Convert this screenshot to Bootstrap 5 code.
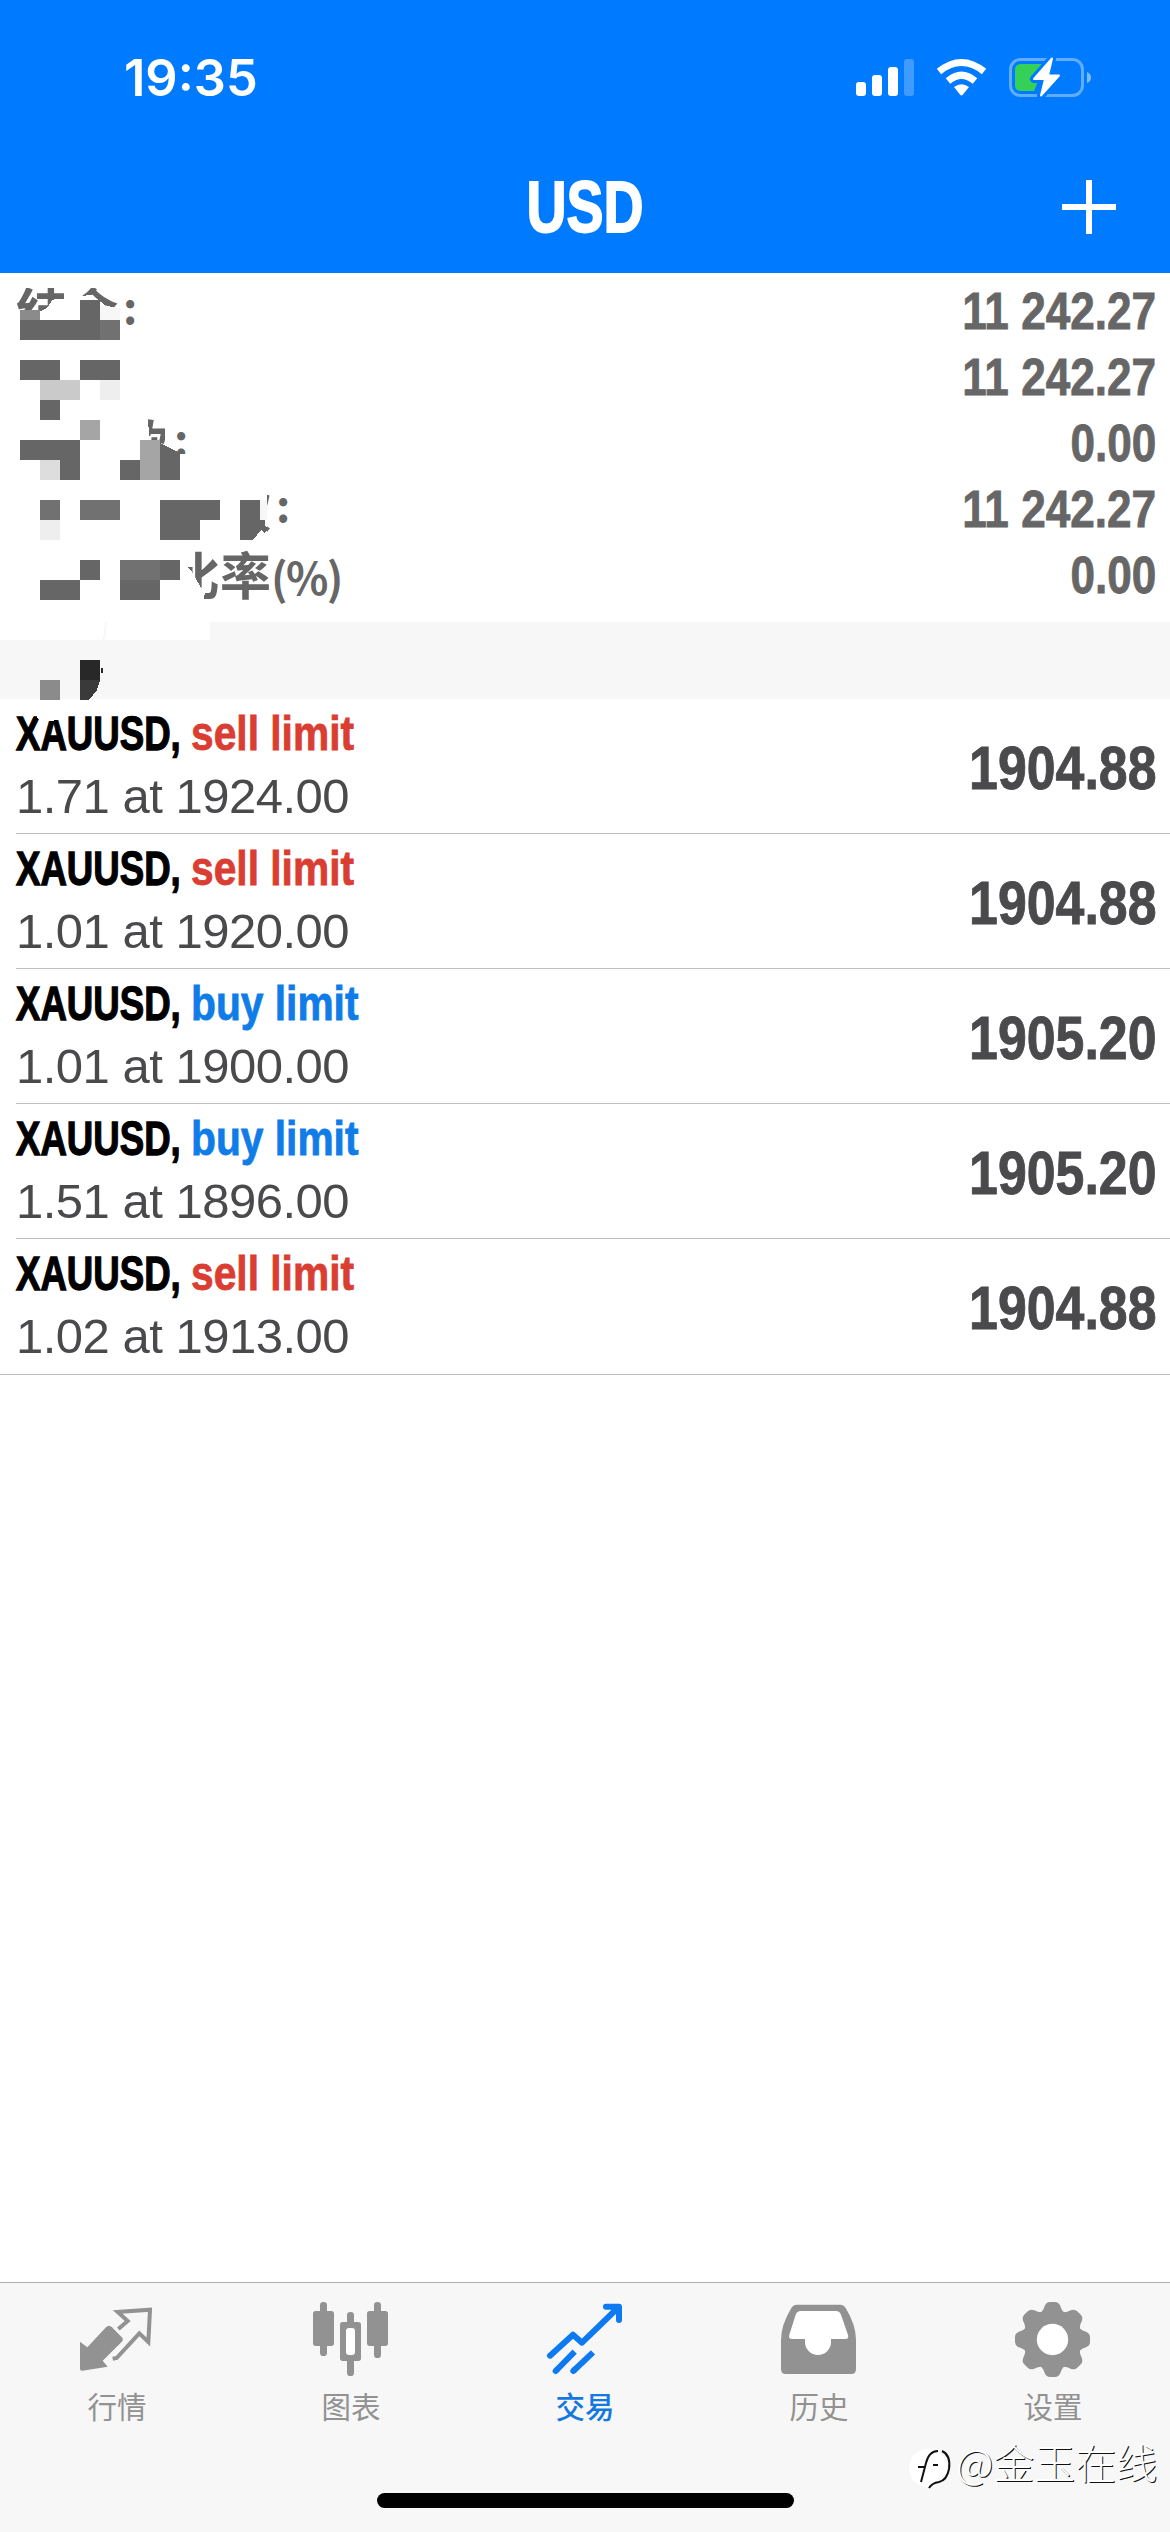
<!DOCTYPE html>
<html lang="zh-CN">
<head>
<meta charset="utf-8">
<meta name="viewport" content="width=device-width, initial-scale=1">
<title>USD</title>
<link href="https://cdn.jsdelivr.net/npm/bootstrap@5.3.0/dist/css/bootstrap.min.css" rel="stylesheet">
<style>
body{font-family:"Liberation Sans","Noto Sans CJK SC",sans-serif;background:#fff;color:#4a4a4d}
.screen{width:1170px;height:2532px;overflow:hidden}
.topbar{height:273px;background:#007aff;color:#fff}
.statusline{height:140px;padding:48px 78px 0 124px}
.clock{font:600 50.500px/60px Inter,sans-serif}
.status-icons{margin-top:5px}
.titleline{height:133px;padding:0 54px}
.title-side{width:54px}
.squeeze{display:inline-block;white-space:nowrap;transform-origin:0 50%}
.title{font-size:73px;font-weight:700;line-height:90px;transform:scaleX(.76);transform-origin:50% 50%;-webkit-text-stroke:1.8px #fff}
.summary{height:349px;padding:6px 14px 0 16px}
.summary-row{height:66px;color:#666}
.summary-label{font-size:51px;font-weight:700;line-height:66px;white-space:nowrap}
.label-tail{font-family:"Noto Sans CJK SC",sans-serif;font-size:44px;letter-spacing:-1.600px}
.label-colon{position:relative;top:-7px;margin-left:5px}
.summary-value{font-size:51px;font-weight:700;line-height:66px;transform:scaleX(.865);transform-origin:100% 50%;-webkit-text-stroke:.8px #666}
.band{height:77px;background:#f7f7f7}
.mosaic{left:0;top:273px;pointer-events:none}
.order{height:135px;margin-left:16px;padding:4px 14px 0 0;border-bottom:1px solid #c0c0c2}
.order:last-child{height:136px;margin-left:0;padding-left:16px}
.symbol-box{width:175px;height:60px}
.symbol,.kind{font-size:48.500px;font-weight:700;line-height:60px}
.symbol{color:#000;transform:scaleX(.755);-webkit-text-stroke:1.300px #000}
.kind{transform:scaleX(.84);-webkit-text-stroke:.8px currentColor}
.sell{color:#da3d32}
.buy{color:#0f7ce8}
.volume{font-size:49px;line-height:66px;letter-spacing:-.5px}
.price{font-size:61px;font-weight:700;line-height:130px;transform:scaleX(.85);transform-origin:100% 50%;-webkit-text-stroke:.9px #4a4a4d}
.tabs{height:250px;background:#f7f7f7;border-top:1px solid #b0b0b2;color:#929292}
.tab-item{padding-top:17px;font:400 29.5px/44px "Noto Sans CJK SC",sans-serif}
.tab-item svg{display:block;margin-bottom:5px}
.tab-item.active{color:#1478e0;font-weight:500}
.homebar{left:377px;top:2493px;width:417px;height:15px;border-radius:8px;background:#000}
.watermark{left:908px;top:2434px;color:#fff}
.watermark-text{font:300 41px/56px "Noto Sans CJK SC",sans-serif;text-shadow:1px 1px 0 #111;margin:-3px 0 0 2px;white-space:nowrap}
</style>
<script src="https://cdn.jsdelivr.net/npm/bootstrap@5.3.0/dist/js/bootstrap.bundle.min.js"></script>
</head>
<body>
<div class="screen position-relative d-flex flex-column">
  <header class="topbar">
    <div class="statusline d-flex justify-content-between align-items-start">
      <span class="clock">19:35</span>
      <svg class="status-icons" width="240" height="50" viewBox="852 53 240 50">
        <g fill="#fff"><rect x="856" y="82" width="10" height="14" rx="3"/><rect x="872" y="75" width="10" height="21" rx="3"/><rect x="888" y="67" width="10" height="29" rx="3"/><rect x="904" y="59" width="10" height="37" rx="3" opacity=".25"/></g>
        <g fill="none" stroke="#fff" stroke-width="7"><path d="M939 71.500Q961.500 53.500 984 71.500"/><path d="M948 81Q961.500 69.500 975 81"/></g>
        <path d="M954 87Q961.500 81.500 969 87L963 94.500Q961.500 96.500 960 94.500Z" fill="#fff"/>
        <rect x="1010.500" y="59.500" width="72" height="36" rx="10" fill="none" stroke="#fff" stroke-opacity=".38" stroke-width="3"/>
        <path d="M1087 72Q1091 73.500 1091 77.500T1087 83Z" fill="#fff" opacity=".5"/>
        <path d="M1021 64H1045L1034 91H1021Q1015 91 1015 85V70Q1015 64 1021 64Z" fill="#34d058"/>
        <path d="M1052 58.500L1034 79H1045L1041 95.500L1059 75.500H1048Z" fill="#fff" stroke="#007aff" stroke-width="8" stroke-linejoin="round"/>
        <path d="M1052 58.500L1034 79H1045L1041 95.500L1059 75.500H1048Z" fill="#fff" stroke="#fff" stroke-width="2" stroke-linejoin="round"/>
      </svg>
    </div>
    <div class="titleline d-flex align-items-center">
      <div class="title-side"></div>
      <div class="flex-fill text-center"><span class="squeeze title">USD</span></div>
      <svg width="54" height="54" viewBox="0 0 54 54"><path d="M27 0V54M0 27H54" stroke="#fff" stroke-width="6"/></svg>
    </div>
  </header>

  <section class="summary">
    <div class="summary-row d-flex justify-content-between align-items-start"><span class="summary-label">结余<span class="label-tail label-colon">:</span></span><span class="squeeze summary-value">11 242.27</span></div>
    <div class="summary-row d-flex justify-content-end"><span class="squeeze summary-value">11 242.27</span></div>
    <div class="summary-row d-flex justify-content-between align-items-start"><span class="summary-label">预付款<span class="label-tail label-colon">:</span></span><span class="squeeze summary-value">0.00</span></div>
    <div class="summary-row d-flex justify-content-between align-items-start"><span class="summary-label">可用预付款<span class="label-tail label-colon">:</span></span><span class="squeeze summary-value">11 242.27</span></div>
    <div class="summary-row d-flex justify-content-between align-items-start"><span class="summary-label">预付款比率<span class="label-tail">(%)</span></span><span class="squeeze summary-value">0.00</span></div>
  </section>
  <div class="band"></div>

  <main class="flex-fill">
    <div class="order d-flex justify-content-between"><div><div class="d-flex"><div class="symbol-box"><span class="squeeze symbol">XAUUSD,</span></div><span class="squeeze kind sell">sell limit</span></div><div class="volume">1.71 at 1924.00</div></div><span class="squeeze price">1904.88</span></div>
    <div class="order d-flex justify-content-between"><div><div class="d-flex"><div class="symbol-box"><span class="squeeze symbol">XAUUSD,</span></div><span class="squeeze kind sell">sell limit</span></div><div class="volume">1.01 at 1920.00</div></div><span class="squeeze price">1904.88</span></div>
    <div class="order d-flex justify-content-between"><div><div class="d-flex"><div class="symbol-box"><span class="squeeze symbol">XAUUSD,</span></div><span class="squeeze kind buy">buy limit</span></div><div class="volume">1.01 at 1900.00</div></div><span class="squeeze price">1905.20</span></div>
    <div class="order d-flex justify-content-between"><div><div class="d-flex"><div class="symbol-box"><span class="squeeze symbol">XAUUSD,</span></div><span class="squeeze kind buy">buy limit</span></div><div class="volume">1.51 at 1896.00</div></div><span class="squeeze price">1905.20</span></div>
    <div class="order d-flex justify-content-between"><div><div class="d-flex"><div class="symbol-box"><span class="squeeze symbol">XAUUSD,</span></div><span class="squeeze kind sell">sell limit</span></div><div class="volume">1.02 at 1913.00</div></div><span class="squeeze price">1904.88</span></div>
  </main>

  <nav class="tabs d-flex">
    <div class="tab-item col d-flex flex-column align-items-center">
      <svg width="78" height="78" viewBox="234 90 234 234" fill="currentColor"><path d="M240 215L262 232L318 172Q327 163 336 172L364 200Q373 208 364 217L308 272L323 290L247 302Q240 303 240 296Z"/><path d="M355 177L383 153L353 126L450 119L445 216L418 190L350 264L338 266" fill="none" stroke="currentColor" stroke-width="12"/></svg>
      <span>行情</span>
    </div>
    <div class="tab-item col d-flex flex-column align-items-center">
      <svg width="78" height="78" viewBox="936 90 234 234" fill="currentColor"><rect x="939" y="123" width="63" height="105" rx="8"/><rect x="960" y="96" width="21" height="162" rx="10"/><rect x="1101" y="123" width="63" height="105" rx="8"/><rect x="1122" y="96" width="21" height="168" rx="10"/><rect x="1041" y="126" width="21" height="192" rx="10"/><rect x="1020" y="156" width="63" height="117" rx="8"/><rect x="1038" y="174" width="27" height="81" rx="9" fill="#fff"/></svg>
      <span>图表</span>
    </div>
    <div class="tab-item active col d-flex flex-column align-items-center">
      <svg width="78" height="78" viewBox="198 90 234 234" fill="none" stroke="#0d7af2" stroke-width="18" stroke-linecap="round" stroke-linejoin="round"><path d="M210 257L279 194L306 218L410 117M378 110H417V150"/><path d="M227 303L284 245M280 303L339 247" stroke-linecap="butt"/><path d="M227 303L230 300M280 303L283 300"/></svg>
      <span>交易</span>
    </div>
    <div class="tab-item col d-flex flex-column align-items-center">
      <svg width="78" height="78" viewBox="900 90 234 234" fill="currentColor"><path d="M950 104H1080Q1091 104 1097 114Q1128 165 1128 210V298Q1128 312 1114 312H917Q903 312 903 298V210Q903 165 934 114Q940 104 950 104Z"/><path d="M962 123H1068Q1079 123 1083 134L1104 195Q1107 207 1097 207H1053V216A39 39 0 0 1 975 216V207H937Q924 207 928 194L947 134Q951 123 962 123Z" fill="#fff"/></svg>
      <span>历史</span>
    </div>
    <div class="tab-item col d-flex flex-column align-items-center">
      <svg width="78" height="78" viewBox="402 90 234 234"><g fill="#929292"><circle cx="517.500" cy="208.500" r="86"/><g id="teeth"><path id="tooth" d="M476 132Q489 125 494 108Q499 96 510 96H525Q536 96 541 108Q546 125 559 132Z"/><use href="#tooth" transform="rotate(45 517.500 208.500)"/><use href="#tooth" transform="rotate(90 517.500 208.500)"/><use href="#tooth" transform="rotate(135 517.500 208.500)"/></g><use href="#teeth" transform="rotate(180 517.500 208.500)"/></g><circle cx="517.500" cy="208.500" r="47" fill="#fff"/></svg>
      <span>设置</span>
    </div>
  </nav>

  <!-- pixelated blocks that hide the account labels -->
  <svg class="mosaic position-absolute" width="360" height="460" viewBox="0 273 360 460" shape-rendering="crispEdges">
    <g fill="#fff">
      <path d="M10 274H124V288H10ZM10 312H40L48 307L52 300H64V288H80V296L92 295L106 306L122 308V345H10Z"/>
      <path d="M10 410H148V422L150 440L172 450V480H10ZM165 410H172V450L165 445ZM172 454H190V470H172Z"/>
      <path d="M10 480H267V545H10Z"/>
      <path d="M10 545H184V562L192 572L200 586L205 592L203 606H10Z"/>
      <path d="M0 606H210V640H0Z"/>
      <path d="M37 710H62L59 720L48 721L45 723L37 718Z"/>
    </g>
    <path d="M106 622L104 640" stroke="#f7f7f7" stroke-width="2"/>
    <g fill="#666">
      <path d="M80 300h20v20h-20zM20 320h80v20h-80zM20 360h40v20h-40zM80 360h40v20h-40zM40 400h20v20h-20zM20 440h60v20h-60zM60 460h20v20h-20zM120 460h20v20h-20z"/>
      <path d="M160 443L180 453V480H160ZM160 500h60v20h-20v20h-40zM240 500H260V520H265V525L268 529L264 533L261 530L253 540H240Z"/>
      <path d="M80 560h20v20h-20zM40 580h40v20h-40zM160 560h20v20h-20zM120 580h40v20h-40z"/>
    </g>
    <path d="M100 320h20v20h-20zM40 500h20v20h-20zM80 500h40v20h-40zM120 560h40v20h-40z" fill="#717171"/>
    <path d="M20 310h20v10h-20zM40 680h20v20h-20z" fill="#8b8b8b"/>
    <path d="M80 420h20v20h-20zM140 440h20v40h-20z" fill="#a5a5a5"/>
    <path d="M40 380h40v20h-40z" fill="#cacaca"/>
    <path d="M40 460h20v20h-20z" fill="#ddd"/>
    <path d="M100 380h20v20h-20zM40 520h20v20h-20z" fill="#eee"/>
    <path d="M100 306L120 308V320H100ZM260 500h7v20h-7z" fill="#f7f7f7"/>
    <path d="M80 660h20v20h-20zM101 668h2v5h-2z" fill="#282828"/>
    <path d="M80 680H100L97 690L89 700H80Z" fill="#3a3a3a"/>
  </svg>

  <div class="homebar position-absolute"></div>
  <div class="watermark position-absolute d-flex align-items-center">
    <svg width="46" height="56" viewBox="0 0 46 56"><circle cx="20" cy="34" r="19" fill="#fff"/><path d="M13 48L18 29Q21 17 30 17M10 33H17M25 31H30M34 17Q43 21 41 35Q39 46 31 48Q24 49 21 54" fill="none" stroke="#111" stroke-width="2"/></svg>
    <span class="watermark-text">@金玉在线</span>
  </div>
</div>
</body>
</html>
